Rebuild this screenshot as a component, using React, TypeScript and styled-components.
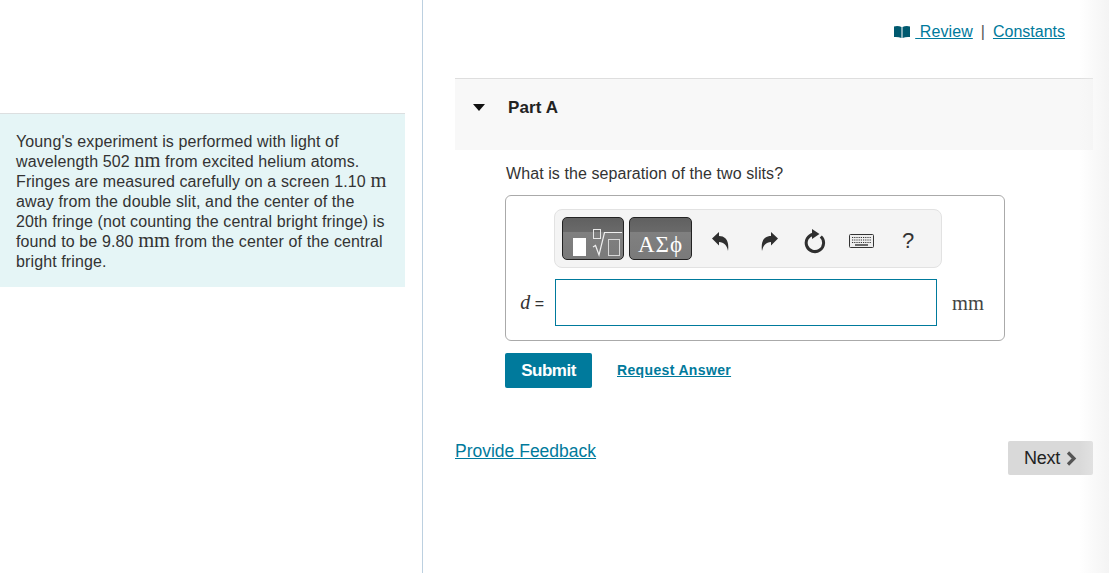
import styled, { createGlobalStyle } from 'styled-components';

const Global = createGlobalStyle`
  html, body { margin: 0; padding: 0; background: #fff; }
  body {
    font-family: "Liberation Sans", Arial, sans-serif;
    font-size: 16px;
    color: #333;
    overflow: hidden;
  }
`;

const Page = styled.div`
  position: relative;
  display: flex;
  width: 1109px;
  height: 573px;
  overflow: hidden;
  &::after {
    content: '';
    position: absolute;
    top: 0;
    right: 0;
    bottom: 0;
    width: 30px;
    background: linear-gradient(to right, rgba(240, 240, 240, 0), rgba(240, 240, 240, 0.75));
    pointer-events: none;
  }
`;

const Sidebar = styled.aside`
  box-sizing: border-box;
  width: 423px;
  padding: 113px 17px 0 0;
  border-right: 1px solid #bcd0e0;
`;

const Intro = styled.div`
  padding: 18px 0 15px 16px;
  border-top: 1px solid #dcdfe0;
  background: #e5f5f6;
  line-height: 20px;
  letter-spacing: 0.12px;
  white-space: nowrap;
`;

const Unit = styled.span`
  font-family: "Liberation Serif", serif;
  font-size: 20.5px;
  line-height: 0;
  letter-spacing: 0;
`;

const Main = styled.main`
  flex: 1;
  padding: 0 16px 0 32px;
`;

const TopLinks = styled.div`
  display: flex;
  justify-content: flex-end;
  align-items: center;
  height: 78px;
  padding: 0 28px 15px 0;
  box-sizing: border-box;
  color: #555;
`;

const Link = styled.a`
  color: #007a9c;
  text-decoration: underline;
`;

const ReviewLink = styled(Link)`
  display: inline-flex;
  align-items: center;
  white-space: pre;
  letter-spacing: 0.1px;
`;

const BookGlyph = styled.svg`
  margin-right: 5px;
`;

const Separator = styled.span`
  margin: 0 8px;
`;

const PartHeader = styled.div`
  display: flex;
  align-items: flex-start;
  height: 71px;
  border-top: 1px solid #dedede;
  background: #f8f8f8;
`;

const Caret = styled.span`
  width: 0;
  height: 0;
  margin: 25px 22px 0 18px;
  border-left: 6.500px solid transparent;
  border-right: 6.500px solid transparent;
  border-top: 7px solid #111;
`;

const PartTitle = styled.h2`
  margin: 19px 0 0 1px;
  font-size: 17px;
  line-height: 20px;
  font-weight: 700;
  letter-spacing: 0.1px;
  color: #222;
`;

const PartBody = styled.div`
  padding: 14px 0 0 50px;
`;

const Question = styled.p`
  margin: 0 0 11px 1px;
  line-height: 20px;
  letter-spacing: 0.08px;
`;

const AnswerBox = styled.div`
  box-sizing: border-box;
  width: 500px;
  height: 146px;
  padding: 13px 19px 0 0;
  border: 1px solid #aaa;
  border-radius: 6px;
`;

const Toolbar = styled.div`
  box-sizing: border-box;
  display: flex;
  align-items: center;
  width: 388px;
  height: 59px;
  margin-left: 48px;
  padding-left: 7px;
  border: 1px solid #e2e2e2;
  border-radius: 8px;
  background: #f4f4f4;
`;

const TemplateButton = styled.div<{ $width: number; $inset: number }>`
  box-sizing: border-box;
  display: flex;
  align-items: center;
  justify-content: center;
  width: ${(p) => p.$width}px;
  height: 43px;
  margin-right: 5px;
  padding-top: ${(p) => p.$inset}px;
  border: 1px solid #222;
  border-radius: 5px;
  background: linear-gradient(to bottom, #606060, #6a6a6a 34%, #808080 34%, #7a7a7a 100%);
  color: #fff;
  font-family: "Liberation Serif", serif;
  font-size: 23px;
  letter-spacing: 1px;
  overflow: hidden;
`;

const ToolIcon = styled.span<{ $width: number }>`
  display: flex;
  align-items: center;
  justify-content: center;
  width: ${(p) => p.$width}px;
  height: 43px;
  padding-top: 5px;
  color: #2f2f2f;
`;

const Help = styled(ToolIcon)`
  font-size: 22px;
  color: #333;
`;

const ArrowGlyph = styled.svg<{ $flip?: boolean }>`
  transform: ${(p) => (p.$flip ? 'scaleX(-1)' : 'none')};
`;

const AnswerRow = styled.div`
  display: flex;
  align-items: center;
  height: 47px;
  margin-top: 11px;
`;

const Label = styled.label`
  box-sizing: border-box;
  width: 49px;
  padding-right: 11px;
  text-align: right;
  white-space: pre;
`;

const Variable = styled.i`
  font-family: "Liberation Serif", serif;
  font-size: 20px;
`;

const Equals = styled.span`
  font-size: 16px;
`;

const AnswerInput = styled.input`
  box-sizing: border-box;
  width: 382px;
  height: 47px;
  padding: 0 8px;
  border: 1px solid #007a9c;
  background: #fff;
  outline: none;
`;

const RowUnit = styled(Unit)`
  margin-left: 15px;
  color: #444;
`;

const Actions = styled.div`
  display: flex;
  align-items: center;
  margin-top: 12px;
`;

const SubmitButton = styled.button`
  width: 87px;
  height: 35px;
  padding: 0;
  border: 0;
  border-radius: 2px;
  background: #007a9c;
  color: #fff;
  font-family: inherit;
  font-size: 17px;
  font-weight: 700;
  letter-spacing: -0.5px;
`;

const RequestLink = styled(Link)`
  margin: -2px 0 0 25px;
  font-size: 14px;
  font-weight: 700;
  letter-spacing: 0.35px;
`;

const FooterRow = styled.div`
  display: flex;
  justify-content: space-between;
  align-items: flex-start;
  margin-top: 53px;
`;

const FeedbackLink = styled(Link)`
  font-size: 17.500px;
  line-height: 20px;
`;

const NextButton = styled.button`
  display: flex;
  align-items: center;
  justify-content: center;
  gap: 6px;
  width: 85px;
  height: 34px;
  padding: 0;
  border: 0;
  border-radius: 2px;
  background: #d9d9d9;
  color: #222;
  font-family: inherit;
  font-size: 18px;
  letter-spacing: -0.3px;
`;

const BookIcon = () => (
  <BookGlyph width="16" height="12" viewBox="0 0 16 12">
    <path
      d="M0 0.500 Q4 -0.500 7.500 1 V12 Q4 10.500 0 11 Z M8.500 1 Q12 -0.500 16 0.500 V11 Q12 10.500 8.500 12 Z"
      fill="#00596f"
    />
  </BookGlyph>
);

const MathGlyph = () => (
  <svg width="60" height="41" viewBox="0 0 60 41" fill="none">
    <rect x="10" y="20" width="13" height="18" fill="#fff" />
    <path d="M30 29 L32.500 27.500 L36 37 L41.500 14.500 H59" stroke="#f0f0f0" strokeWidth="1.200" />
    <rect x="30.500" y="11.500" width="7" height="9" stroke="#e8e8e8" />
    <rect x="45.500" y="21.500" width="11" height="16" stroke="#d8d8d8" />
  </svg>
);

const ArrowIcon = ({ flip }: { flip?: boolean }) => (
  <ArrowGlyph $flip={flip} width="17" height="19" viewBox="0 0 17 19">
    <path
      d="M0 6.500 L7 0 V4 C13 4 17.500 8 16 19 C15 13.500 12 10 7 10 V13.500 Z"
      fill="#2f2f2f"
    />
  </ArrowGlyph>
);

const ReloadIcon = () => (
  <svg width="22" height="25" viewBox="0 0 22 25" fill="none">
    <path d="M9.500 5.300 A8.700 8.700 0 1 0 16.800 7.500" stroke="#2f2f2f" strokeWidth="3" />
    <path d="M8 0 L15.500 5 L8 10 Z" fill="#2f2f2f" />
  </svg>
);

const KeyboardGlyph = () => (
  <svg width="25" height="14" viewBox="0 0 25 14" fill="none">
    <rect x="0.500" y="0.500" width="24" height="13" rx="1" fill="#eee" stroke="#333" />
    <path
      d="M3 3.500 H22 M3 6 H22 M3 8.500 H22"
      stroke="#333"
      strokeWidth="1.200"
      strokeDasharray="1.200 1"
    />
    <path d="M6 11 H19" stroke="#333" strokeWidth="1.400" />
  </svg>
);

const ChevronGlyph = () => (
  <svg width="11" height="15" viewBox="0 0 11 15" fill="none">
    <path d="M2 1.500 L8 7.500 L2 13.500" stroke="#555" strokeWidth="3.200" />
  </svg>
);

export default function App() {
  return (
    <Page>
      <Global />
      <Sidebar>
        <Intro>
          Young's experiment is performed with light of
          <br />
          wavelength 502 <Unit>nm</Unit> from excited helium atoms.
          <br />
          Fringes are measured carefully on a screen 1.10 <Unit>m</Unit>
          <br />
          away from the double slit, and the center of the
          <br />
          20th fringe (not counting the central bright fringe) is
          <br />
          found to be 9.80 <Unit>mm</Unit> from the center of the central
          <br />
          bright fringe.
        </Intro>
      </Sidebar>
      <Main>
        <TopLinks>
          <ReviewLink href="#">
            <BookIcon />
            {' Review'}
          </ReviewLink>
          <Separator>|</Separator>
          <Link href="#">Constants</Link>
        </TopLinks>
        <PartHeader>
          <Caret />
          <PartTitle>Part A</PartTitle>
        </PartHeader>
        <PartBody>
          <Question>What is the separation of the two slits?</Question>
          <AnswerBox>
            <Toolbar>
              <TemplateButton $width={62} $inset={0}>
                <MathGlyph />
              </TemplateButton>
              <TemplateButton $width={63} $inset={12}>ΑΣϕ</TemplateButton>
              <ToolIcon $width={46}>
                <ArrowIcon />
              </ToolIcon>
              <ToolIcon $width={52}>
                <ArrowIcon flip />
              </ToolIcon>
              <ToolIcon $width={40}>
                <ReloadIcon />
              </ToolIcon>
              <ToolIcon $width={53}>
                <KeyboardGlyph />
              </ToolIcon>
              <Help $width={40}>?</Help>
            </Toolbar>
            <AnswerRow>
              <Label>
                <Variable>d</Variable> <Equals>=</Equals>
              </Label>
              <AnswerInput />
              <RowUnit>mm</RowUnit>
            </AnswerRow>
          </AnswerBox>
          <Actions>
            <SubmitButton>Submit</SubmitButton>
            <RequestLink href="#">Request Answer</RequestLink>
          </Actions>
        </PartBody>
        <FooterRow>
          <FeedbackLink href="#">Provide Feedback</FeedbackLink>
          <NextButton>
            Next
            <ChevronGlyph />
          </NextButton>
        </FooterRow>
      </Main>
    </Page>
  );
}
